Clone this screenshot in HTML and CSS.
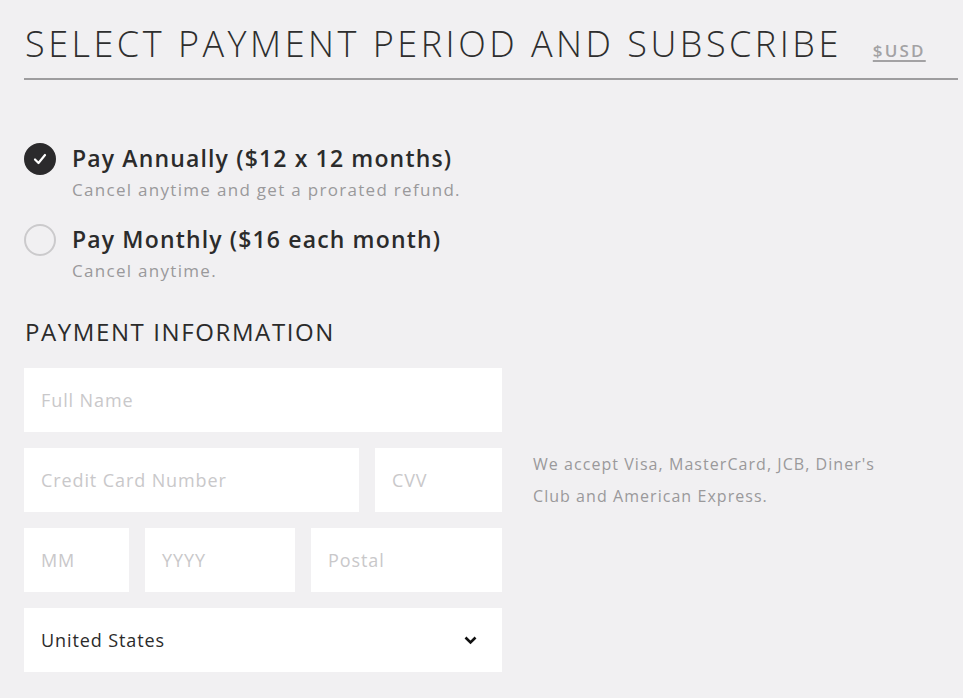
FILE: index.html
```html
<!DOCTYPE html>
<html lang="en">
<head>
    <meta charset="UTF-8">
    <title>Subscribe</title>
    <link rel="stylesheet" href="styles.css">
</head>
<body>

<div class="page">
    <div class="heading">
        <h1>SELECT PAYMENT PERIOD AND SUBSCRIBE</h1>
        <a class="currency" href="#">$USD</a>
    </div>

    <div class="plans">
        <label class="plan">
            <span class="radio checked">
                <svg width="14" height="12" viewBox="0 0 14 12"><path d="M2 6.5 L5.5 10 L12 2" fill="none" stroke="#fff" stroke-width="2.2" stroke-linecap="round" stroke-linejoin="round"/></svg>
            </span>
            <span class="plan-text">
                <span class="plan-title">Pay Annually ($12 x 12 months)</span>
                <span class="plan-note">Cancel anytime and get a prorated refund.</span>
            </span>
        </label>
        <label class="plan">
            <span class="radio"></span>
            <span class="plan-text">
                <span class="plan-title">Pay Monthly ($16 each month)</span>
                <span class="plan-note">Cancel anytime.</span>
            </span>
        </label>
    </div>

    <h2>PAYMENT INFORMATION</h2>

    <div class="payment">
        <div class="fields">
            <div class="row">
                <div class="field grow">Full Name</div>
            </div>
            <div class="row">
                <div class="field card">Credit Card Number</div>
                <div class="field cvv">CVV</div>
            </div>
            <div class="row">
                <div class="field mm">MM</div>
                <div class="field yyyy">YYYY</div>
                <div class="field grow">Postal</div>
            </div>
            <div class="row">
                <div class="field select grow">
                    <span>United States</span>
                    <svg width="13" height="9" viewBox="0 0 13 9"><path d="M1.5 1.5 L6.5 6.5 L11.5 1.5" fill="none" stroke="#111" stroke-width="2.6"/></svg>
                </div>
            </div>
        </div>
        <p class="accepted">We accept Visa, MasterCard, JCB, Diner's Club and American Express.</p>
    </div>
</div>

</body>
</html>
```

FILE: styles.css
```css
body {
    margin: 0;
    background: #f1f0f2;
    font-family: "Open Sans", "Noto Sans", sans-serif;
    color: #2b2b2b;
}

.page {
    padding: 0 5px 0 24px;
}

/* En-tete */
.heading {
    display: flex;
    align-items: baseline;
    gap: 31px;
    padding: 22px 0 12px 1px;
    border-bottom: 2px solid #9e9d9f;
}

.heading h1 {
    margin: 0;
    font-size: 36px;
    font-weight: 300;
    line-height: 44px;
    letter-spacing: 3.5px;
    color: #2e2e2e;
}

.currency {
    font-size: 17px;
    font-weight: 600;
    letter-spacing: 2.2px;
    color: #a3a2a4;
    text-decoration: underline;
    text-decoration-thickness: 2px;
    text-underline-offset: 3px;
}

/* Periodes */
.plans {
    display: flex;
    flex-direction: column;
    gap: 17px;
    margin-top: 60px;
}

.plan {
    display: flex;
    gap: 16px;
}

.radio {
    width: 32px;
    height: 32px;
    box-sizing: border-box;
    border: 2px solid #cbcacc;
    border-radius: 50%;
    margin-top: 3px;
    display: flex;
    justify-content: center;
    align-items: center;
    flex-shrink: 0;
}

.radio.checked {
    background: #2b2a2c;
    border-color: #2b2a2c;
}

.plan-text {
    display: flex;
    flex-direction: column;
}

.plan-title {
    font-size: 23px;
    font-weight: 600;
    line-height: 36px;
    letter-spacing: 1.15px;
}

.plan-note {
    font-size: 17px;
    line-height: 28px;
    color: #9a999b;
    letter-spacing: 1.3px;
}

h2 {
    margin: 31px 0 20px 1px;
    font-size: 24px;
    font-weight: 400;
    line-height: 32px;
    letter-spacing: 1.6px;
}

/* Formulaire */
.payment {
    display: flex;
    gap: 31px;
}

.fields {
    width: 478px;
    display: flex;
    flex-direction: column;
    gap: 16px;
}

.row {
    display: flex;
    gap: 16px;
}

.field {
    height: 64px;
    background: #fff;
    padding: 0 16px 0 17px;
    box-sizing: border-box;
    display: flex;
    align-items: center;
    font-size: 18px;
    color: #c9c8ca;
    letter-spacing: 0.9px;
}

.grow { flex: 1; }
.card { width: 335px; }
.cvv { flex: 1; }
.mm { width: 105px; }
.yyyy { width: 150px; }

.select {
    justify-content: space-between;
    color: #2b2b2b;
    padding-right: 25px;
}

.accepted {
    width: 360px;
    margin: 80px 0 0;
    font-size: 16px;
    line-height: 32px;
    color: #9a999b;
    letter-spacing: 1.05px;
}
```
